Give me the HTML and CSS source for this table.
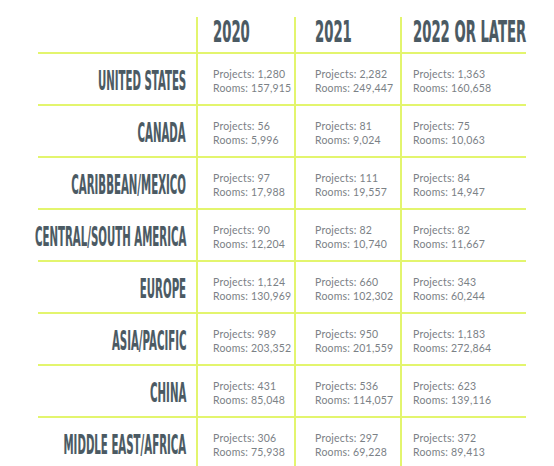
FILE: index.html
```html
<!DOCTYPE html>
<html lang="en">
<head>
  <meta charset="UTF-8">
  <meta name="viewport" content="width=device-width, initial-scale=1.0">
  <title>Hotel Pipeline by Region</title>
  <link rel="stylesheet" href="styles.css">
</head>
<body>

<div class="pipeline">
  <div class="cell head-cell corner"></div>
  <div class="cell head-cell c1"><span class="year">2020</span></div>
  <div class="cell head-cell c2"><span class="year">2021</span></div>
  <div class="cell head-cell c3"><span class="year">2022 OR LATER</span></div>

  <div class="cell region"><span class="region-name">UNITED STATES</span></div>
  <div class="cell data c1"><span>Projects: 1,280</span><span>Rooms: 157,915</span></div>
  <div class="cell data c2"><span>Projects: 2,282</span><span>Rooms: 249,447</span></div>
  <div class="cell data c3"><span>Projects: 1,363</span><span>Rooms: 160,658</span></div>

  <div class="cell region"><span class="region-name">CANADA</span></div>
  <div class="cell data c1"><span>Projects: 56</span><span>Rooms: 5,996</span></div>
  <div class="cell data c2"><span>Projects: 81</span><span>Rooms: 9,024</span></div>
  <div class="cell data c3"><span>Projects: 75</span><span>Rooms: 10,063</span></div>

  <div class="cell region"><span class="region-name">CARIBBEAN/MEXICO</span></div>
  <div class="cell data c1"><span>Projects: 97</span><span>Rooms: 17,988</span></div>
  <div class="cell data c2"><span>Projects: 111</span><span>Rooms: 19,557</span></div>
  <div class="cell data c3"><span>Projects: 84</span><span>Rooms: 14,947</span></div>

  <div class="cell region"><span class="region-name">CENTRAL/SOUTH AMERICA</span></div>
  <div class="cell data c1"><span>Projects: 90</span><span>Rooms: 12,204</span></div>
  <div class="cell data c2"><span>Projects: 82</span><span>Rooms: 10,740</span></div>
  <div class="cell data c3"><span>Projects: 82</span><span>Rooms: 11,667</span></div>

  <div class="cell region"><span class="region-name">EUROPE</span></div>
  <div class="cell data c1"><span>Projects: 1,124</span><span>Rooms: 130,969</span></div>
  <div class="cell data c2"><span>Projects: 660</span><span>Rooms: 102,302</span></div>
  <div class="cell data c3"><span>Projects: 343</span><span>Rooms: 60,244</span></div>

  <div class="cell region"><span class="region-name">ASIA/PACIFIC</span></div>
  <div class="cell data c1"><span>Projects: 989</span><span>Rooms: 203,352</span></div>
  <div class="cell data c2"><span>Projects: 950</span><span>Rooms: 201,559</span></div>
  <div class="cell data c3"><span>Projects: 1,183</span><span>Rooms: 272,864</span></div>

  <div class="cell region"><span class="region-name">CHINA</span></div>
  <div class="cell data c1"><span>Projects: 431</span><span>Rooms: 85,048</span></div>
  <div class="cell data c2"><span>Projects: 536</span><span>Rooms: 114,057</span></div>
  <div class="cell data c3"><span>Projects: 623</span><span>Rooms: 139,116</span></div>

  <div class="cell region"><span class="region-name">MIDDLE EAST/AFRICA</span></div>
  <div class="cell data c1"><span>Projects: 306</span><span>Rooms: 75,938</span></div>
  <div class="cell data c2"><span>Projects: 297</span><span>Rooms: 69,228</span></div>
  <div class="cell data c3"><span>Projects: 372</span><span>Rooms: 89,413</span></div>
</div>

</body>
</html>
```

FILE: styles.css
```css
:root {
  --rule: #e3f56e;
  --ink: #4b5a63;
  --muted: #7b8186;
}
body {
  margin: 0;
  padding-top: 17px;
  background: #fff;
  overflow: hidden;
}
.pipeline {
  display: grid;
  grid-template-columns: 158px 98px 106px 126px;
  grid-template-rows: 37px repeat(8, 52px);
  margin-left: 38px;
  width: 488px;
}
.cell {
  box-sizing: border-box;
  border-bottom: 2px solid var(--rule);
  display: flex;
  align-items: center;
}
.c1, .c2, .c3 {
  border-left: 2px solid var(--rule);
}
.c1 { padding-left: 15px; }
.c2 { padding-left: 19px; }
.c3 { padding-left: 11px; }
.head-cell {
  align-items: flex-start;
}
.year, .region-name {
  display: inline-block;
  font-family: 'DejaVu Sans', sans-serif;
  font-stretch: condensed;
  font-weight: bold;
  color: var(--ink);
  white-space: nowrap;
  -webkit-text-stroke: 0.2px var(--ink);
}
.year {
  font-size: 30px;
  line-height: 30px;
  transform: scaleX(0.49);
  transform-origin: left center;
}
.region {
  justify-content: flex-end;
  padding-right: 10px;
}
.region-name {
  font-size: 27px;
  line-height: 27px;
  transform: scaleX(0.42);
  transform-origin: right center;
  margin-top: 2px;
}
.data {
  flex-direction: column;
  align-items: flex-start;
  justify-content: center;
  padding-top: 5px;
  font-family: 'Lato', sans-serif;
  font-size: 10.5px;
  letter-spacing: 0.2px;
  line-height: 13.5px;
  color: var(--muted);
  white-space: nowrap;
}
```
